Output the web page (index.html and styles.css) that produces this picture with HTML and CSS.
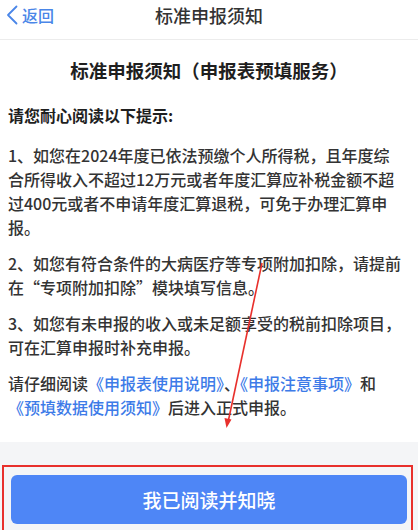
FILE: index.html
```html
<!DOCTYPE html>
<html lang="zh-CN">
<head>
    <meta charset="UTF-8">
    <meta name="viewport" content="width=device-width, initial-scale=1.0">
    <title>标准申报须知</title>
    <link rel="stylesheet" href="styles.css">
</head>
<body>
    <div class="page">
        <header class="nav">
            <a class="back" href="#">
                <svg class="back-icon" width="12" height="20" viewBox="0 0 12 20">
                    <polyline points="10.5,1.5 2,10 10.5,18.5" fill="none" stroke="#4a86e8" stroke-width="1.8" stroke-linecap="round" stroke-linejoin="round"/>
                </svg>
                <span>返回</span>
            </a>
            <h1>标准申报须知</h1>
            <span></span>
        </header>

        <main class="notice">
            <h2>标准申报须知（申报表预填服务）</h2>
            <p class="lead">请您耐心阅读以下提示:</p>
            <p>1、如您在2024年度已依法预缴个人所得税，且年度综<br>合所得收入不超过12万元或者年度汇算应补税金额不超<br>过400元或者不申请年度汇算退税，可免于办理汇算申<br>报。</p>
            <p>2、如您有符合条件的大病医疗等专项附加扣除，请提前<br>在“专项附加扣除”模块填写信息。</p>
            <p>3、如您有未申报的收入或未足额享受的税前扣除项目，<br>可在汇算申报时补充申报。</p>
            <p>请仔细阅读<a href="#">《申报表使用说明》</a>、<a href="#">《申报注意事项》</a>和<br><a href="#">《预填数据使用须知》</a>后进入正式申报。</p>
        </main>

        <footer class="actions">
            <button class="confirm">我已阅读并知晓</button>
        </footer>

        <!-- annotation marks from the screenshot -->
        <div class="mark-box"></div>
        <svg class="mark-arrow" width="418" height="530" viewBox="0 0 418 530">
            <line x1="262" y1="263" x2="228.5" y2="420" stroke="#e8302c" stroke-width="1.6"/>
            <polygon points="226.5,428 224.5,418 231.5,419.5" fill="#e8302c"/>
        </svg>
    </div>
</body>
</html>
```

FILE: styles.css
```css
body {
    margin: 0;
    font-family: "Noto Sans CJK SC", "Noto Sans", sans-serif;
    color: #333;
    background-color: #f4f5f7;
}
.page {
    position: relative;
    width: 418px;
    height: 530px;
    overflow: hidden;
    background-color: #f4f5f7;
}
.nav {
    display: grid;
    grid-template-columns: 1fr auto 1fr;
    align-items: center;
    padding: 3px 0 12px;
    background-color: #fff;
    border-bottom: 1px solid #ececec;
}
.nav h1 {
    margin: 0;
    font-size: 18px;
    line-height: 24px;
    font-weight: 500;
    color: #333;
}
.back {
    display: flex;
    align-items: center;
    gap: 4px;
    padding-left: 6px;
    color: #4a86e8;
    font-size: 16px;
    line-height: 24px;
    font-weight: 500;
    text-decoration: none;
}
.back-icon {
    display: block;
}
.notice {
    background-color: #fff;
    padding: 17px 8px 23px;
}
.notice h2 {
    margin: 0 0 20px;
    font-size: 18.5px;
    line-height: 26px;
    font-weight: bold;
    text-align: center;
    color: #1f1f1f;
}
.notice p {
    margin: 12px 0 0;
    font-size: 16px;
    line-height: 24px;
    font-weight: 500;
    color: #333;
}
.notice .lead {
    margin: 0 0 16px;
    font-weight: bold;
    color: #1f1f1f;
}
.notice .lead + p {
    margin-top: 0;
}
.notice a {
    color: #3d7be8;
    text-decoration: none;
}
.actions {
    padding: 33px 11px 6px;
}
.confirm {
    display: block;
    width: 100%;
    height: 49px;
    border: none;
    border-radius: 6px;
    background-color: #4e86f6;
    color: #fff;
    font-family: inherit;
    font-size: 19px;
    font-weight: 500;
    cursor: pointer;
}
.mark-box {
    position: absolute;
    left: 2px;
    top: 465px;
    width: 407px;
    height: 80px;
    border: 2px solid #e8302c;
}
.mark-arrow {
    position: absolute;
    left: 0;
    top: 0;
    pointer-events: none;
}
```
